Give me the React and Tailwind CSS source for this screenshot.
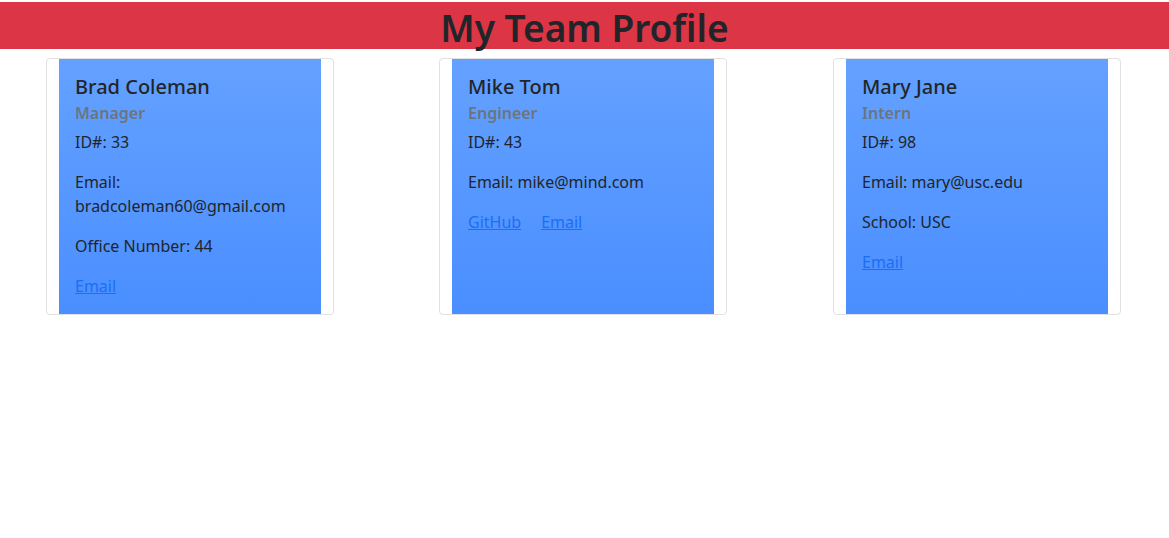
const team = [
  {
    name: "Brad Coleman",
    role: "Manager",
    id: 33,
    lines: ["Email: bradcoleman60@gmail.com", "Office Number: 44"],
    links: ["Email"],
  },
  {
    name: "Mike Tom",
    role: "Engineer",
    id: 43,
    lines: ["Email: mike@mind.com"],
    links: ["GitHub", "Email"],
  },
  {
    name: "Mary Jane",
    role: "Intern",
    id: 98,
    lines: ["Email: mary@usc.edu", "School: USC"],
    links: ["Email"],
  },
];

function Card({ member }) {
  return (
    <div className="w-[288px] rounded-[4px] border border-[#dfe1e4] bg-white px-3 flex">
      <div className="flex-1 bg-gradient-to-b from-[#64a1ff] to-[#4a8eff] p-4">
        <h5 className="text-[20px] leading-[24px] font-medium text-[#212529]">{member.name}</h5>
        <h6 className="mt-[5px] text-[16px] leading-[19px] font-semibold text-[#6c757d]">{member.role}</h6>
        <p className="mt-[7px] mb-4 leading-[24px]">ID#: {member.id}</p>
        {member.lines.map((line) => (
          <p key={line} className="mb-4 leading-[24px] break-words">
            {line}
          </p>
        ))}
        <div className="flex gap-5 leading-[24px]">
          {member.links.map((l) => (
            <a key={l} href="#" className="text-[#1a6ff4] underline">
              {l}
            </a>
          ))}
        </div>
      </div>
    </div>
  );
}

export default function App() {
  return (
    <div
      className="min-h-[538px] bg-white pt-[2px] text-[16px] text-[#212529]"
      style={{ fontFamily: '"Noto Sans", "Open Sans", sans-serif' }}
    >
      <header className="h-[47px] bg-[#dc3545]">
        <h1 className="text-center text-[37px] leading-[52px] font-semibold text-[#212529]">
          My Team Profile
        </h1>
      </header>
      <main className="mt-[9px] flex pl-[46px]">
        {team.map((m, i) => (
          <div key={m.name} className={i === 0 ? "flex" : i === 1 ? "flex ml-[105px]" : "flex ml-[106px]"}>
            <Card member={m} />
          </div>
        ))}
      </main>
    </div>
  );
}
